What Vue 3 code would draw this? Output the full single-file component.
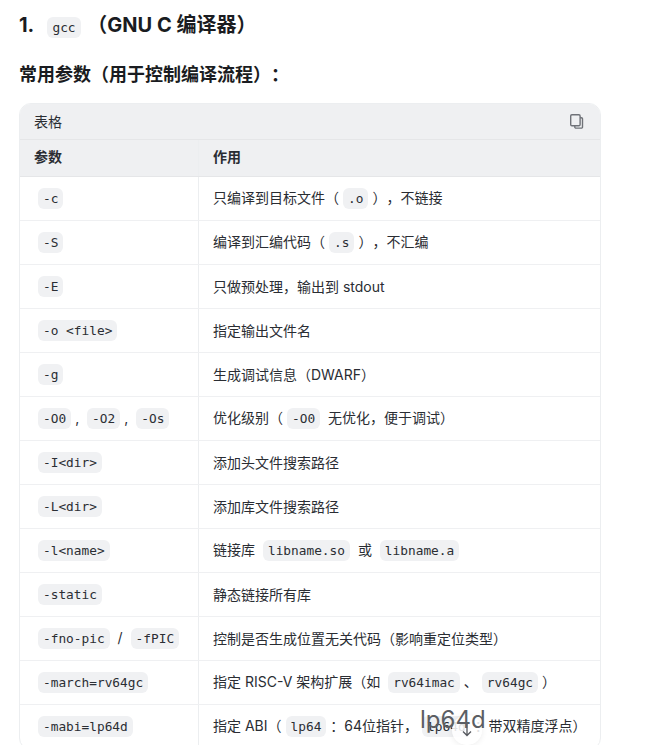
<script setup>
const rows = [
  { p: [{ c: '-c' }], d: [{ t: '只编译到目标文件（' }, { c: '.o' }, { t: '），不链接' }] },
  { p: [{ c: '-S' }], d: [{ t: '编译到汇编代码（' }, { c: '.s' }, { t: '），不汇编' }] },
  { p: [{ c: '-E' }], d: [{ t: '只做预处理，输出到 stdout' }] },
  { p: [{ c: '-o <file>' }], d: [{ t: '指定输出文件名' }] },
  { p: [{ c: '-g' }], d: [{ t: '生成调试信息（DWARF）' }] },
  { p: [{ c: '-O0' }, { t: ', ' }, { c: '-O2' }, { t: ', ' }, { c: '-Os' }], d: [{ t: '优化级别（' }, { c: '-O0' }, { t: ' 无优化，便于调试）' }] },
  { p: [{ c: '-I<dir>' }], d: [{ t: '添加头文件搜索路径' }] },
  { p: [{ c: '-L<dir>' }], d: [{ t: '添加库文件搜索路径' }] },
  { p: [{ c: '-l<name>' }], d: [{ t: '链接库 ' }, { c: 'libname.so' }, { t: ' 或 ' }, { c: 'libname.a' }] },
  { p: [{ c: '-static' }], d: [{ t: '静态链接所有库' }] },
  { p: [{ c: '-fno-pic' }, { t: ' / ' }, { c: '-fPIC' }], d: [{ t: '控制是否生成位置无关代码（影响重定位类型）' }] },
  { p: [{ c: '-march=rv64gc' }], d: [{ t: '指定 RISC-V 架构扩展（如 ' }, { c: 'rv64imac' }, { t: '、' }, { c: 'rv64gc' }, { t: '）' }] },
  { p: [{ c: '-mabi=lp64d' }], d: [{ t: '指定 ABI（' }, { c: 'lp64' }, { t: '：64位指针，' }, { c: 'lp64d' }, { t: '：带双精度浮点）' }] }
]
</script>

<template>
  <div class="page">
    <h3 class="title">1. <code class="code">gcc</code> （GNU C 编译器）</h3>
    <h4 class="sub">常用参数（用于控制编译流程）：</h4>
    <div class="card">
      <div class="bar">
        <span>表格</span>
        <svg class="copy" width="16" height="16" viewBox="0 0 16 16" fill="none" stroke="#6f7278" stroke-width="1.4">
          <rect x="2.7" y="1.7" width="9.4" height="11" rx="1.2" />
          <path d="M12.1 4.7h1.2a1.2 1.2 0 0 1 1.2 1.2v8a1.2 1.2 0 0 1-1.2 1.2H8a1.2 1.2 0 0 1-1.2-1.2v-1.2" />
        </svg>
      </div>
      <div class="thead row">
        <div class="col1">参数</div>
        <div class="col2">作用</div>
      </div>
      <div v-for="(r, i) in rows" :key="i" class="row body">
        <div class="col1"><div class="cell"><template v-for="(x, j) in r.p" :key="j"><code v-if="x.c" class="code">{{ x.c }}</code><span v-else>{{ x.t }}</span></template></div></div>
        <div class="col2"><div class="cell"><template v-for="(x, j) in r.d" :key="j"><code v-if="x.c" class="code">{{ x.c }}</code><span v-else>{{ x.t }}</span></template></div></div>
      </div>
    </div>
    <div class="float">lp64d</div>
    <button class="down" aria-label="down">
      <svg width="16" height="16" viewBox="0 0 16 16" fill="none" stroke="#55585e" stroke-width="1.3">
        <path d="M8 2v11M4 9.5l4 4 4-4" />
      </svg>
    </button>
  </div>
</template>

<style>
html, body { margin: 0; background: #fff; }
</style>

<style scoped>
.page {
  position: relative;
  width: 646px;
  height: 745px;
  overflow: hidden;
  box-sizing: border-box;
  padding: 11px 45px 0 19px;
  font-family: Inter, "Noto Sans CJK SC", sans-serif;
  text-spacing-trim: space-all;
  color: #1a1c21;
  background: #fff;
}
.title {
  margin: 0;
  font-size: 20px;
  font-weight: 700;
  line-height: 28px;
}
.title .code { margin: 0 2px 0 9px; }
.sub {
  margin: 23px 0 0;
  font-size: 18px;
  font-weight: 700;
  line-height: 26px;
}
.card {
  margin-top: 15px;
  border: 1px solid #eceef0;
  border-radius: 12px;
  overflow: hidden;
  font-size: 14px;
  color: #2a2d33;
}
.bar {
  height: 33px;
  background: #eff0f2;
  border-bottom: 1px solid #e5e6e8;
  display: flex;
  align-items: center;
  justify-content: space-between;
  padding: 0 16px 2px 14px;
}
.row { display: flex; }
.thead {
  height: 36px;
  background: #eff0f2;
  border-bottom: 1px solid #e5e6e8;
  font-weight: 600;
}
.body { height: 43px; border-bottom: 1px solid #eff0f2; }
.col1, .col2 {
  display: flex;
  align-items: center;
  box-sizing: border-box;
  padding: 0 0 2px 14px;
}
.body .col1 { padding-bottom: 0; }
.thead .col1, .thead .col2 { padding-bottom: 4px; }
.col1 { width: 179px; border-right: 1px solid #eceef0; }
.col2 { flex: 1; }
.cell { white-space: pre; }
.code {
  font-family: "DejaVu Sans Mono", monospace;
  font-size: 12.8px;
  font-weight: 400;
  line-height: 21px;
  display: inline-block;
  padding: 0 5px;
  margin: 0 4px;
  border-radius: 6px;
  background: #f0f1f3;
  color: #2b2e34;
}
.float {
  position: absolute;
  left: 420px;
  top: 704px;
  font-size: 24px;
  line-height: 32px;
  color: #5b5e63;
  z-index: 2;
}
.down {
  position: absolute;
  left: 452px;
  top: 715px;
  width: 30px;
  height: 30px;
  padding: 0;
  border: 0;
  border-radius: 50%;
  background: rgba(255, 255, 255, 0.85);
  box-shadow: 0 1px 6px rgba(0, 0, 0, 0.08);
  display: flex;
  align-items: center;
  justify-content: center;
}
</style>
